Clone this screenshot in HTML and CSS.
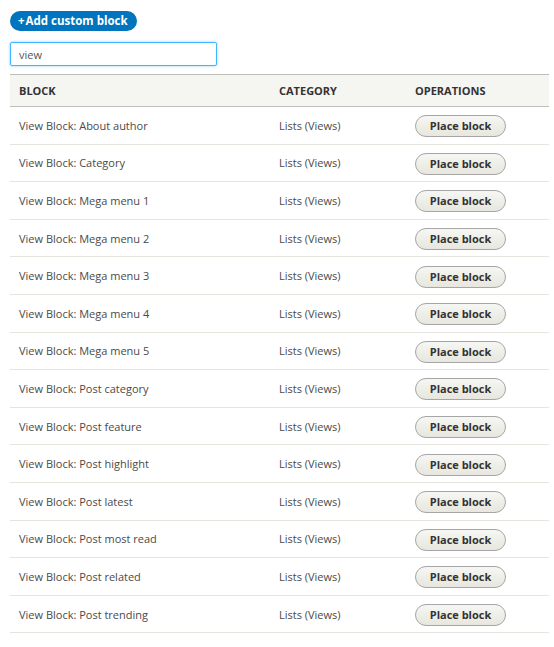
FILE: index.html
```html
<!DOCTYPE html>
<html>
<head>
<meta charset="utf-8">
<link rel="stylesheet" href="styles.css">
</head>
<body>
<div class="page">
  <a class="add-btn" href="#"><span class="plus">+</span>Add custom block</a>
  <input class="filter" type="text" value="view">
  <table class="blocks">
    <thead>
      <tr><th class="c1">Block</th><th class="c2">Category</th><th class="c3">Operations</th></tr>
    </thead>
    <tbody>
      <tr><td>View Block: About author</td><td>Lists (Views)</td><td><span class="place">Place block</span></td></tr>
      <tr><td>View Block: Category</td><td>Lists (Views)</td><td><span class="place">Place block</span></td></tr>
      <tr><td>View Block: Mega menu 1</td><td>Lists (Views)</td><td><span class="place">Place block</span></td></tr>
      <tr><td>View Block: Mega menu 2</td><td>Lists (Views)</td><td><span class="place">Place block</span></td></tr>
      <tr><td>View Block: Mega menu 3</td><td>Lists (Views)</td><td><span class="place">Place block</span></td></tr>
      <tr><td>View Block: Mega menu 4</td><td>Lists (Views)</td><td><span class="place">Place block</span></td></tr>
      <tr><td>View Block: Mega menu 5</td><td>Lists (Views)</td><td><span class="place">Place block</span></td></tr>
      <tr><td>View Block: Post category</td><td>Lists (Views)</td><td><span class="place">Place block</span></td></tr>
      <tr><td>View Block: Post feature</td><td>Lists (Views)</td><td><span class="place">Place block</span></td></tr>
      <tr><td>View Block: Post highlight</td><td>Lists (Views)</td><td><span class="place">Place block</span></td></tr>
      <tr><td>View Block: Post latest</td><td>Lists (Views)</td><td><span class="place">Place block</span></td></tr>
      <tr><td>View Block: Post most read</td><td>Lists (Views)</td><td><span class="place">Place block</span></td></tr>
      <tr><td>View Block: Post related</td><td>Lists (Views)</td><td><span class="place">Place block</span></td></tr>
      <tr><td>View Block: Post trending</td><td>Lists (Views)</td><td><span class="place">Place block</span></td></tr>
    </tbody>
  </table>
</div>
</body>
</html>
```
FILE: styles.css
```css
html, body { margin: 0; padding: 0; background: #fff; }
body { font-family: "Open Sans", "DejaVu Sans", sans-serif; font-size: 11px; color: #444; }
.page { padding: 11px 5px 0 10px; }
.add-btn {
  display: inline-block;
  background: #0074bd;
  color: #fff;
  font-weight: bold;
  font-size: 11.5px;
  line-height: 20px;
  height: 20px;
  padding: 0 9px 0 8px;
  border-radius: 10px;
  text-decoration: none;
}
.plus { margin-right: 1px; }
.filter {
  display: block;
  margin: 11px 0 8px 0;
  width: 207px;
  height: 24px;
  box-sizing: border-box;
  border: 1px solid #40b6ff;
  border-radius: 2px;
  box-shadow: 0 0 3px rgba(64, 182, 255, 0.6);
  font-family: inherit;
  font-size: 11px;
  color: #555;
  padding: 0 8px;
  outline: none;
}
.blocks { width: 539px; border-collapse: collapse; }
.blocks th {
  background: #f5f5f2;
  border-top: 1px solid #bfbfba;
  border-bottom: 1px solid #bfbfba;
  text-align: left;
  text-transform: uppercase;
  font-weight: bold;
  color: #333;
  font-size: 11px;
  height: 31px;
  padding: 0 9px;
}
.blocks .c1 { width: 242px; }
.blocks .c2 { width: 118px; }
.blocks td {
  border-bottom: 1px solid #e6e4df;
  height: 36.6px;
  padding: 0 9px;
  color: #4a4a4a;
}
.place {
  display: inline-block;
  width: 91px;
  height: 22px;
  box-sizing: border-box;
  line-height: 20px;
  margin-top: 2px;
  text-align: center;
  border: 1px solid #a6a6a6;
  border-radius: 11px;
  background: linear-gradient(#f6f6f3, #e7e7df);
  color: #333;
  font-weight: bold;
  font-size: 11px;
}
```
